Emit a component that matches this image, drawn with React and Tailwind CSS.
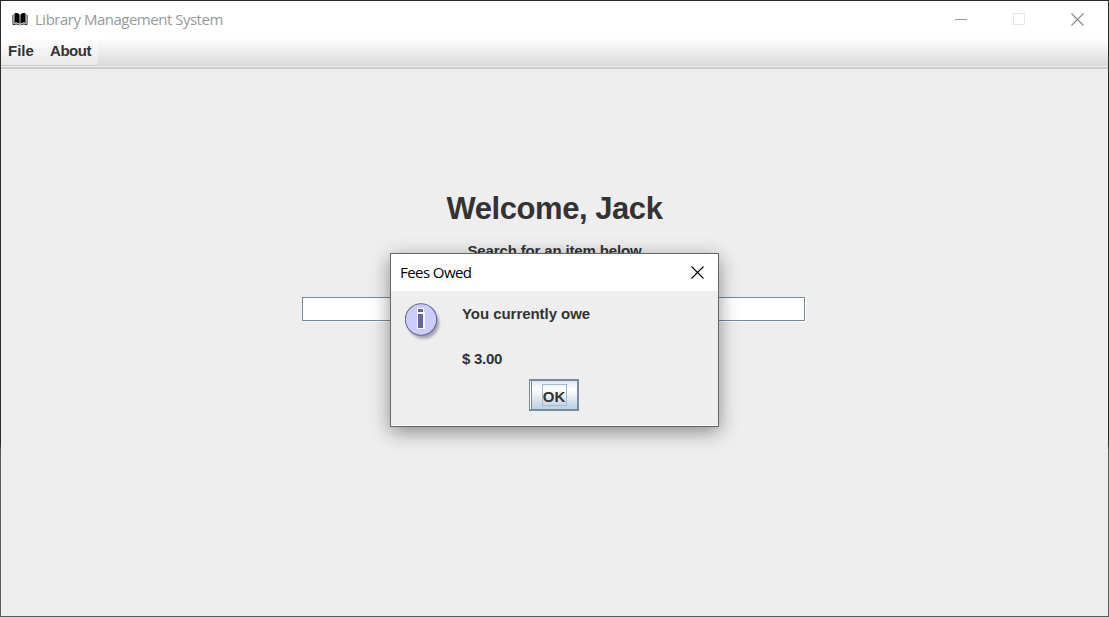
function BookIcon() {
  return (
    <svg className="block h-4 w-4" viewBox="0 0 16 16">
      <path d="M3 1C5 .8 6.800 1.500 7.600 2.700V12C6.500 10.800 5 10.300 3 10.500Z" fill="#000" />
      <path d="M13 1C11 .8 9.200 1.500 8.400 2.700V12C9.500 10.800 11 10.300 13 10.500Z" fill="#000" />
      <path d="M.8 3V12.500M15.200 3V12.500" stroke="#555" />
      <path d="M2.200 1.500V11.500M13.800 1.500V11.500" stroke="#333" />
      <path d="M1 12.800C4 11.600 6 11.900 7.500 13M15 12.800C12 11.600 10 11.900 8.500 13" stroke="#111" fill="none" />
    </svg>
  );
}

function CloseIcon({ className }) {
  return (
    <svg className={className} viewBox="0 0 13 13" fill="none" stroke="currentColor" strokeWidth="1.1">
      <path d="M.5.5 12.500 12.500M12.500.5.5 12.500" />
    </svg>
  );
}

function InfoIcon() {
  return (
    <svg className="block h-10 w-10" viewBox="0 0 40 40">
      <defs>
        <filter id="soft" x="-20%" y="-20%" width="140%" height="140%">
          <feGaussianBlur stdDeviation="1.500" />
        </filter>
      </defs>
      <circle cx="18.500" cy="20" r="15.500" fill="#777" opacity=".65" filter="url(#soft)" />
      <circle cx="16" cy="16.500" r="15.700" fill="#ccccff" stroke="#666699" strokeWidth="1.100" />
      <path d="M12 5h7v5h-7zM12 9h8v17h-8z" fill="#fff" opacity=".85" />
      <path d="M13 6h5v3h-5zM13 11h5v14h-5z" fill="#666699" />
    </svg>
  );
}

function MenuBar() {
  return (
    <div className="flex h-[31px] flex-none flex-col font-['Liberation_Sans',sans-serif] text-[15px] font-bold text-[#333]">
      <div className="h-7 bg-linear-to-b from-white to-[#dadada]">
        <div className="flex h-[28px] w-[97px] border-b border-[#ccc] bg-linear-to-b from-white to-[#e8e8e8] pl-[7px] leading-[25px]">
          <span className="w-[42px]">File</span>
          <span className="tracking-[-0.45px]">About</span>
        </div>
      </div>
      <div className="h-px bg-[#eee]" />
      <div className="h-0.5 bg-[#ccc]" />
    </div>
  );
}

function FeesDialog() {
  return (
    <div className="absolute top-[253px] left-[390px] flex h-[174px] w-[329px] flex-col border border-[#666] bg-[#eee] shadow-[0_5px_18px_rgba(0,0,0,0.42)]">
      <div className="flex h-[37px] flex-none items-center justify-between bg-white pr-[14px] pb-px pl-[9px]">
        <span className="pt-px font-['Open_Sans',sans-serif] text-[15px] tracking-[-0.560px] text-black">Fees Owed</span>
        <CloseIcon className="block h-[13px] w-[13px] text-black" />
      </div>
      <div className="flex flex-1 flex-col border-b border-white">
        <div className="flex h-[88px] pt-3 pl-3.5">
          <InfoIcon />
          <div className="ml-[17px] text-[15px] leading-[22.500px] font-bold tracking-[-0.05px] text-[#333]">
            <p>You currently owe</p>
            <p className="mt-[22px] tracking-[-0.25px]">$ 3.00</p>
          </div>
        </div>
        <button className="ml-[138px] flex h-8 w-[50px] border-2 border-l border-[#7a8a99] bg-white pl-px">
          <span className="flex h-full w-full justify-center border-l border-[#7a8a99] bg-linear-to-b from-[#dde8f3] via-white via-30% to-[#b8cfe5] pt-[3px] pr-px">
            <span className="flex h-[22px] w-[25px] items-center justify-center border border-[#a3b8cc] pt-[5px] text-[15px] font-bold text-[#333]">OK</span>
          </span>
        </button>
      </div>
    </div>
  );
}

export default function App() {
  return (
    <div className="relative flex h-[617px] w-[1109px] flex-col overflow-hidden bg-linear-to-b from-[#2b2b2b] from-[72%] to-[#5b5b5b] to-[73%] p-px font-['Liberation_Sans',sans-serif]">
      <div className="flex h-[37px] flex-none items-center bg-white pl-[11px]">
        <BookIcon />
        <span className="ml-[7px] font-['Open_Sans',sans-serif] text-[15px] tracking-[-0.490px] text-[#999]">Library Management System</span>
        <div className="ml-auto flex items-center gap-[46px] pr-6 pb-px text-[#888]">
          <span className="h-px w-3 bg-[#999]" />
          <span className="h-3 w-3 border border-[#e6e6e6]" />
          <CloseIcon className="block h-[13px] w-[13px]" />
        </div>
      </div>
      <MenuBar />
      <main className="flex flex-1 flex-col items-center bg-[#eee] pt-[122px] text-[#333]">
        <h1 className="h-9 text-[31px] leading-9 font-bold tracking-[-0.45px]">Welcome, Jack</h1>
        <p className="mt-[14px] h-5 text-[15px] leading-5 font-bold tracking-[-0.15px]">Search for an item below</p>
        <div className="mt-9 mr-px h-[25px] w-[504px] border-r border-b border-white">
          <div className="h-6 w-[503px] border border-[#7a8a99] bg-white" />
        </div>
      </main>
      <FeesDialog />
    </div>
  );
}
